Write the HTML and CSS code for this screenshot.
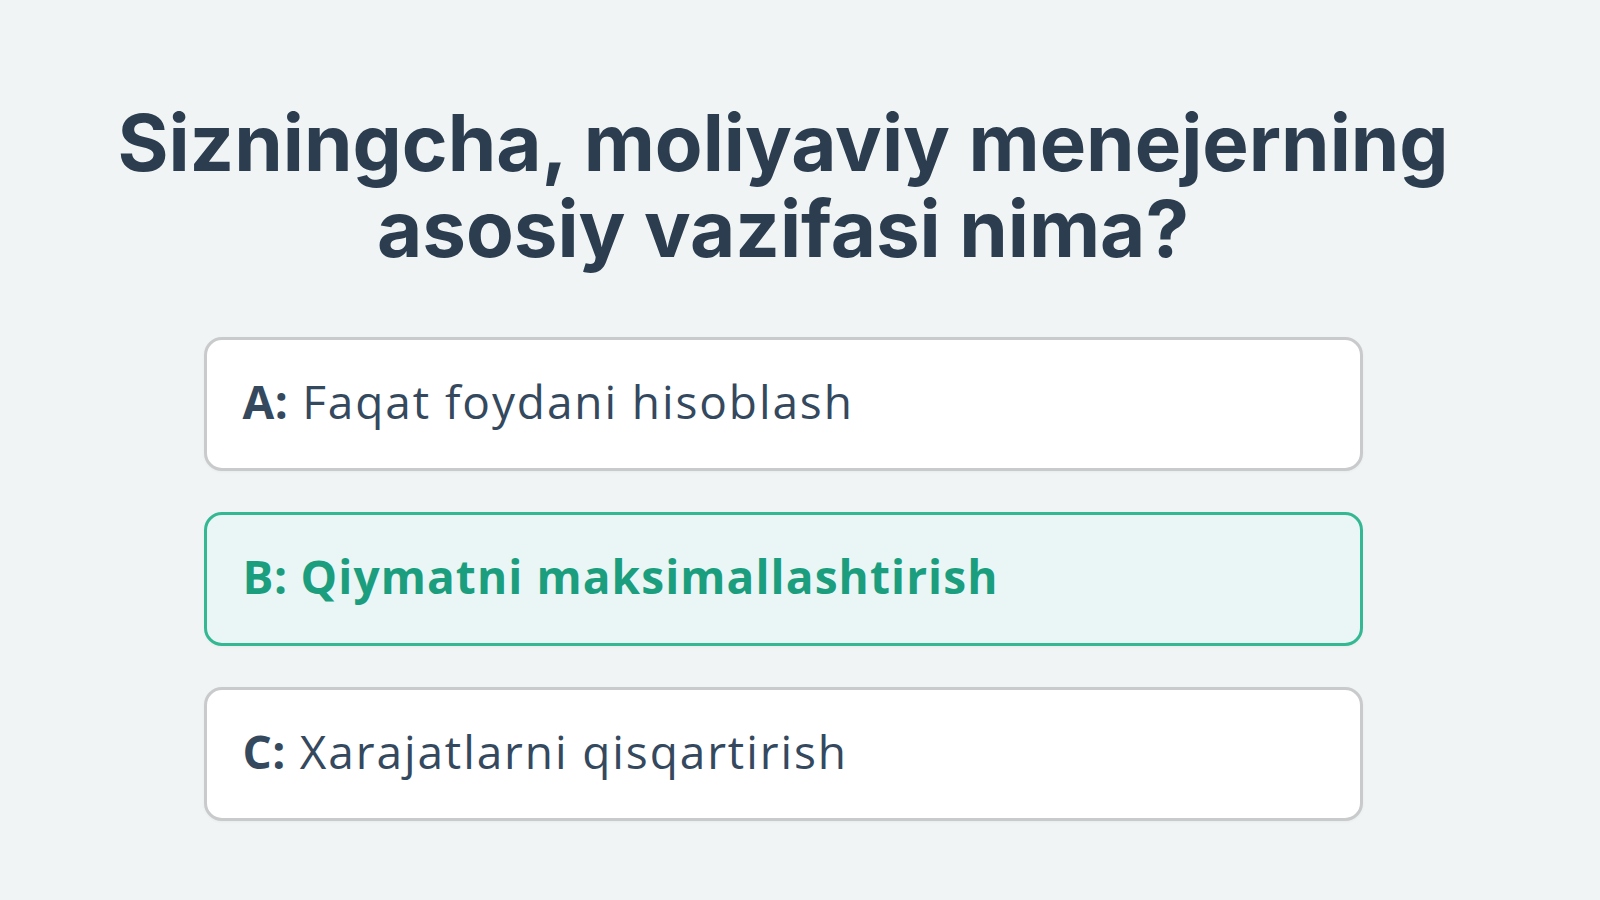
FILE: index.html
```html
<!DOCTYPE html>
<html lang="uz">
<head>
    <meta charset="UTF-8">
    <meta name="viewport" content="width=device-width, initial-scale=1.0">
    <title>Savol</title>
    <link rel="stylesheet" href="styles.css">
</head>
<body>

<div class="quiz">
    <h1 class="question">Sizningcha, moliyaviy menejerning<br>asosiy vazifasi nima?</h1>

    <div class="options">
        <div class="option"><b>A:</b> Faqat foydani hisoblash</div>
        <div class="option selected"><b>B:</b> Qiymatni maksimallashtirish</div>
        <div class="option"><b>C:</b> Xarajatlarni qisqartirish</div>
    </div>
</div>

</body>
</html>
```

FILE: styles.css
```css
/* Savol sahifasi */
body {
    font-family: Inter, "Open Sans", sans-serif;
    background-color: #f1f4f4;
    margin: 0;
    padding: 100px 34px 0 0;
    height: 900px;
    box-sizing: border-box;
    display: flex;
    justify-content: center;
}
.quiz {
    display: flex;
    flex-direction: column;
    align-items: center;
}
.question {
    font-family: Inter, sans-serif;
    font-weight: 700;
    font-size: 78px;
    line-height: 86px;
    color: #2b3d4f;
    text-align: center;
    margin: 0 0 65px 0;
    white-space: nowrap;
}
.options {
    display: flex;
    flex-direction: column;
    gap: 41px;
}
.option {
    width: 1159px;
    height: 134px;
    box-sizing: border-box;
    display: flex;
    align-items: center;
    padding: 0 36px 7px 36px;
    background-color: #ffffff;
    border: 3px solid #c8cacb;
    border-radius: 18px;
    box-shadow: 0 1px 3px rgba(0, 0, 0, 0.04);
    font-family: "Open Sans", sans-serif;
    font-size: 46px;
    letter-spacing: 1.9px;
    color: #34495e;
    white-space: pre;
}
.option b {
    font-weight: 700;
    letter-spacing: 0.5px;
}
.option.selected {
    background-color: #eaf5f5;
    border-color: #33b893;
    color: #1a9e7e;
    font-weight: 700;
    letter-spacing: 1.1px;
}
```
